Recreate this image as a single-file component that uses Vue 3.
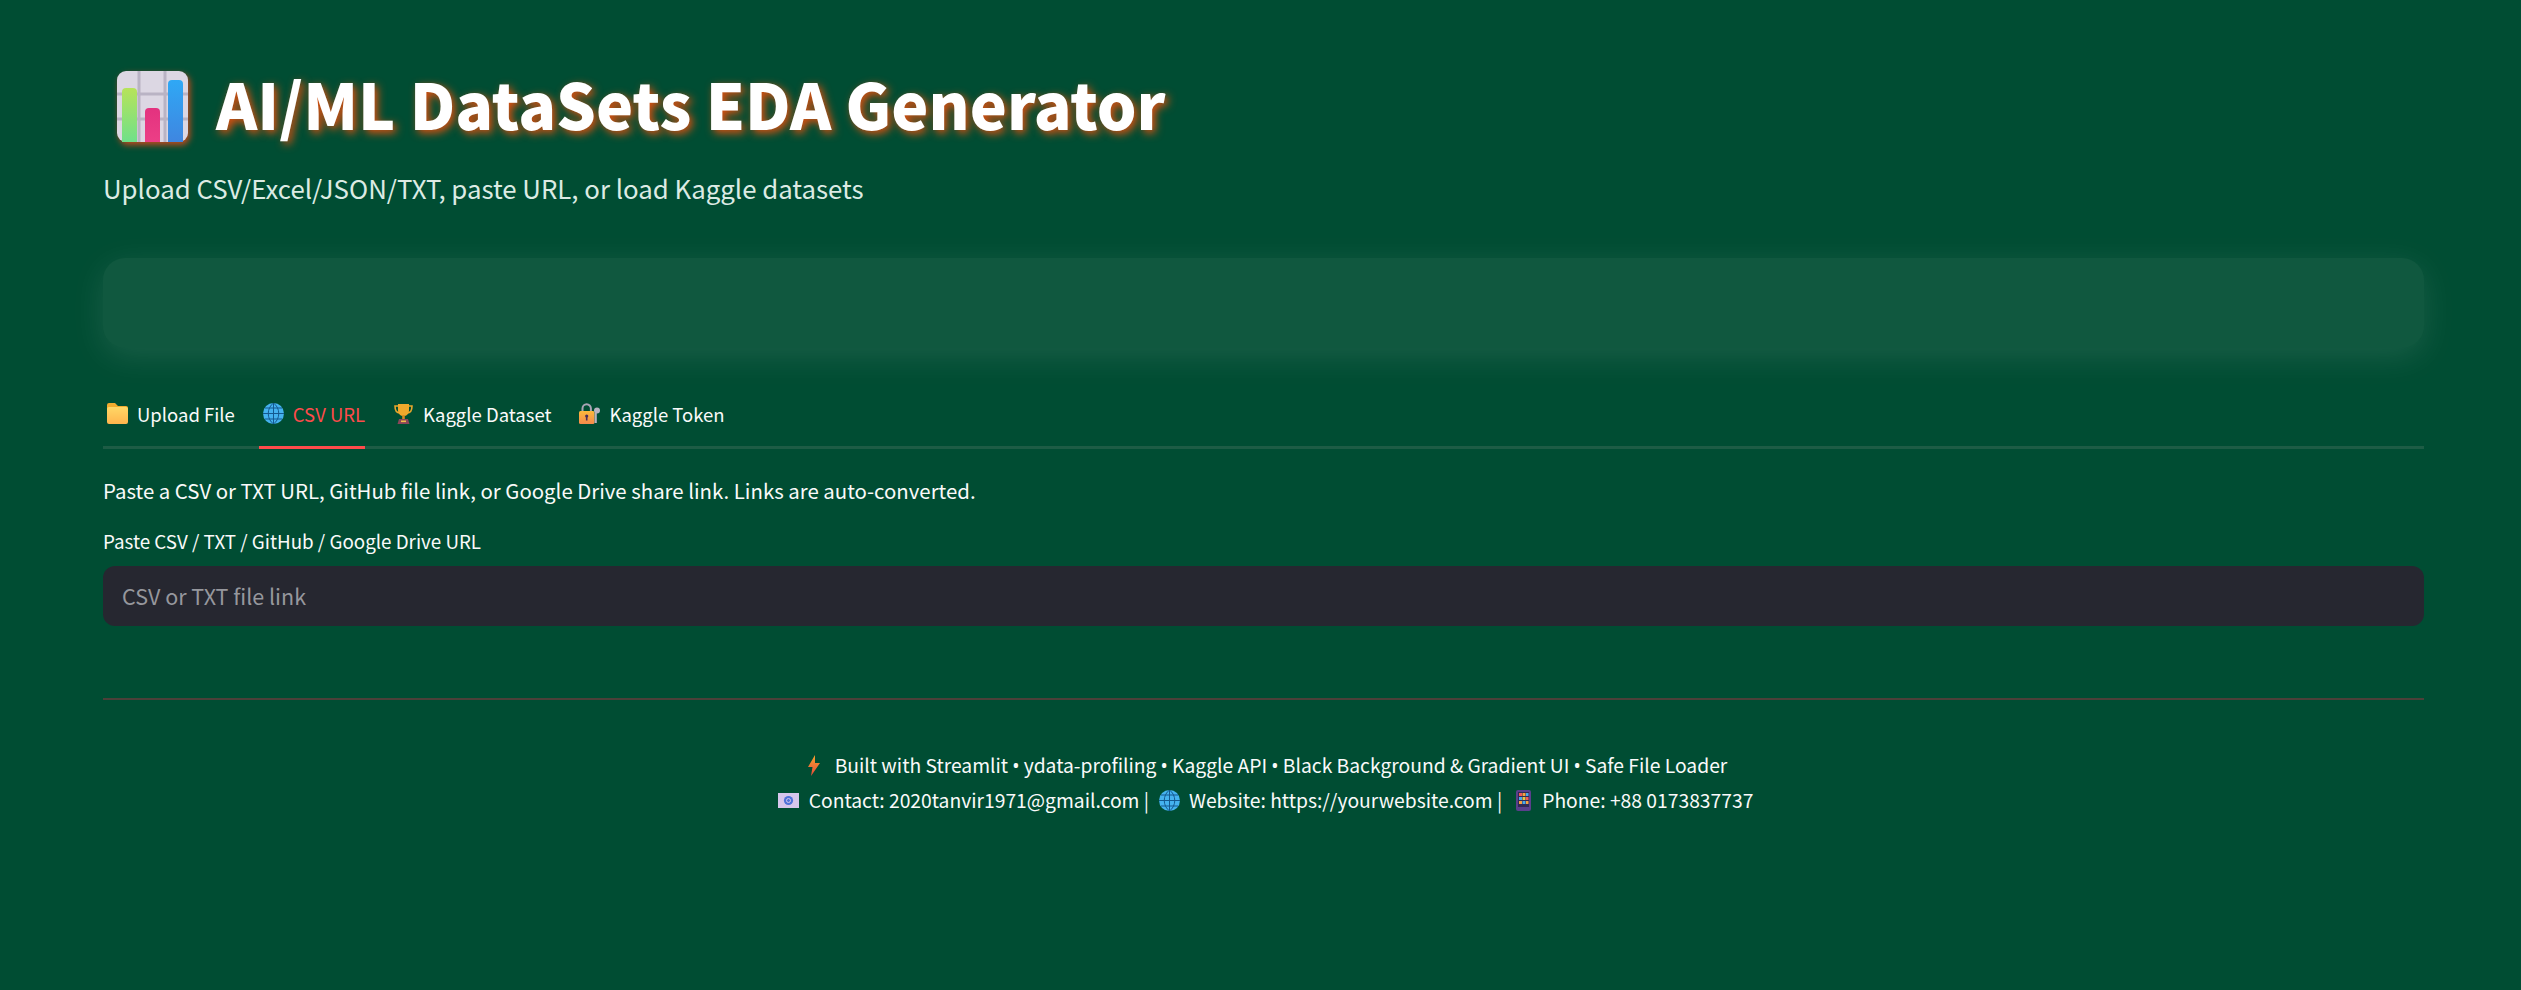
<script setup>
const tabs = [
  { label: 'Upload File', icon: 'folder' },
  { label: 'CSV URL', icon: 'globe', active: true },
  { label: 'Kaggle Dataset', icon: 'trophy' },
  { label: 'Kaggle Token', icon: 'lock' },
]
const credits = ['Built with Streamlit', 'ydata-profiling', 'Kaggle API', 'Black Background & Gradient UI', 'Safe File Loader']
</script>

<template>
  <main class="page">
    <h1 class="title">
      <svg class="chart" viewBox="0 0 71 71" aria-hidden="true">
        <defs>
          <linearGradient id="gGreen" x1="0" y1="0" x2="0" y2="1"><stop offset="0" stop-color="#b7e35a"/><stop offset="1" stop-color="#6fe08a"/></linearGradient>
          <linearGradient id="gPink" x1="0" y1="0" x2="0" y2="1"><stop offset="0" stop-color="#e3327f"/><stop offset="1" stop-color="#ec3f86"/></linearGradient>
          <linearGradient id="gBlue" x1="0" y1="0" x2="0" y2="1"><stop offset="0" stop-color="#2fa8f5"/><stop offset="1" stop-color="#3f86e0"/></linearGradient>
        </defs>
        <rect width="71" height="71" rx="9" fill="#dcd7e3"/>
        <path d="M0 23h71M0 48h71M22 0v71M48 0v71" stroke="#b9b3c4" stroke-width="3"/>
        <path d="M5 71V21a4 4 0 0 1 4-4h7a4 4 0 0 1 4 4v50z" fill="url(#gGreen)"/>
        <path d="M28 71V41a4 4 0 0 1 4-4h7a4 4 0 0 1 4 4v30z" fill="url(#gPink)"/>
        <path d="M51 71V13a4 4 0 0 1 4-4h7a4 4 0 0 1 4 4v58z" fill="url(#gBlue)"/>
      </svg>
      <span class="title-text">AI/ML DataSets EDA Generator</span>
    </h1>
    <p class="subtitle">Upload CSV/Excel/JSON/TXT, paste URL, or load Kaggle datasets</p>
    <div class="glass"></div>
    <nav class="tabs">
      <button v-for="t in tabs" :key="t.label" class="tab" :class="{ active: t.active }">
        <svg class="ico" viewBox="0 0 21 21" aria-hidden="true">
          <template v-if="t.icon === 'folder'">
            <defs><linearGradient id="gFolder" x1="0" y1="0" x2="0" y2="1"><stop offset="0" stop-color="#ffd766"/><stop offset="1" stop-color="#ffb54d"/></linearGradient></defs>
            <path d="M0 2a2 2 0 0 1 2-2h6l3 3h8a2 2 0 0 1 2 2v8H0z" fill="#f2ab2f"/>
            <path d="M0 6a2 2 0 0 1 2-2h17a2 2 0 0 1 2 2v13a2 2 0 0 1-2 2H2a2 2 0 0 1-2-2z" fill="url(#gFolder)"/>
          </template>
          <template v-else-if="t.icon === 'globe'">
            <circle cx="10.5" cy="10.5" r="10.5" fill="#45b2ef"/>
            <path d="M10.5 0v21M0 10.5h21M2 5h17M2 16h17M10.5 0c-7 5-7 16 0 21M10.5 0c7 5 7 16 0 21" stroke="#14598f" stroke-width="1" fill="none"/>
          </template>
          <template v-else-if="t.icon === 'trophy'">
            <path d="M5 3H2c0 5 2 7 5 7M16 3h3c0 5-2 7-5 7" stroke="#e8a62c" stroke-width="1.6" fill="none"/>
            <path d="M5 1h11v6c0 4-2.5 6-5.5 6S5 11 5 7z" fill="#f0a92c"/>
            <rect x="9.2" y="12" width="2.6" height="4" fill="#d58a22"/>
            <path d="M6 16h9l1.5 5h-12z" fill="#8a4659"/>
            <rect x="8" y="17.5" width="5" height="1.6" fill="#f0c04a"/>
          </template>
          <template v-else-if="t.icon === 'lock'">
            <defs><linearGradient id="gLock" x1="0" y1="0" x2="0" y2="1"><stop offset="0" stop-color="#fdb93b"/><stop offset="1" stop-color="#f58a4c"/></linearGradient></defs>
            <path d="M3.5 10V5.5a4.2 4.2 0 0 1 8.4 0V10" stroke="#a9a4b5" stroke-width="2" fill="none"/>
            <rect x="0" y="8" width="15.5" height="13" rx="1.5" fill="url(#gLock)"/>
            <circle cx="7.7" cy="13" r="1.6" fill="#4b2d58"/>
            <rect x="6.9" y="13" width="1.6" height="4.5" fill="#4b2d58"/>
            <path d="M16.7 20V10" stroke="#b8b3c2" stroke-width="2.2"/>
            <circle cx="18" cy="7.5" r="3" fill="#b8b3c2"/>
          </template>
        </svg>
        <span>{{ t.label }}</span>
      </button>
    </nav>
    <p class="hint">Paste a CSV or TXT URL, GitHub file link, or Google Drive share link. Links are auto-converted.</p>
    <label class="label">Paste CSV / TXT / GitHub / Google Drive URL</label>
    <div class="input">CSV or TXT file link</div>
    <hr class="rule" />
    <footer class="footer">
      <div class="line first">
        <svg class="fi zap" viewBox="0 0 12 21" aria-hidden="true">
          <defs><linearGradient id="gZap" x1="0" y1="0" x2="0" y2="1"><stop offset="0" stop-color="#f6a52e"/><stop offset="1" stop-color="#e8483a"/></linearGradient></defs>
          <path d="M7 0 0 12h4.5L3 21l9-13H7z" fill="url(#gZap)"/>
        </svg>
        <template v-for="(c, i) in credits" :key="c">
          <span v-if="i" class="dot">•</span>
          <span>{{ c }}</span>
        </template>
      </div>
      <div class="line second">
        <svg class="fi mail" viewBox="0 0 21 15" aria-hidden="true">
          <rect width="21" height="15" fill="#d6c6ec"/>
          <circle cx="10.5" cy="7.5" r="4.6" fill="#4f72d9"/>
          <circle cx="10.5" cy="7.5" r="2" fill="none" stroke="#d6c6ec" stroke-width="1"/>
        </svg>
        <span>Contact: 2020tanvir1971@gmail.com |</span>
        <svg class="fi globe" viewBox="0 0 21 21" aria-hidden="true">
          <circle cx="10.5" cy="10.5" r="10.5" fill="#45b2ef"/>
          <path d="M10.5 0v21M0 10.5h21M2 5h17M2 16h17M10.5 0c-7 5-7 16 0 21M10.5 0c7 5 7 16 0 21" stroke="#14598f" stroke-width="1" fill="none"/>
        </svg>
        <span>Website: https://yourwebsite.com |</span>
        <svg class="fi phone" viewBox="0 0 15 21" aria-hidden="true">
          <rect width="15" height="21" rx="2" fill="#5a3f8c"/>
          <rect x="2" y="2" width="11" height="15" fill="#2f2a55"/>
          <path d="M3 3h3v3H3z" fill="#f05a5a"/><path d="M6.5 3h3v3h-3z" fill="#f6a23f"/><path d="M10 3h2.5v3H10z" fill="#4aa8e8"/>
          <path d="M3 7h3v3H3z" fill="#4aa8e8"/><path d="M6.5 7h3v3h-3z" fill="#e8c547"/><path d="M10 7h2.5v3H10z" fill="#f05a5a"/>
          <path d="M3 11h3v3H3z" fill="#f6a23f"/><path d="M6.5 11h3v3h-3z" fill="#4aa8e8"/><path d="M10 11h2.5v3H10z" fill="#f6a23f"/>
        </svg>
        <span>Phone: +88 0173837737</span>
      </div>
    </footer>
  </main>
</template>

<style>
html, body { margin: 0; background: #004d33; }
</style>

<style scoped>
.page {
  box-sizing: border-box;
  min-height: 990px;
  padding: 64px 97px 0 103px;
  background: #004d33;
  color: #fafafa;
  font-family: "Noto Sans CJK SC", "Noto Sans", sans-serif;
}
.title {
  display: flex;
  align-items: center;
  height: 84px;
  margin: 0;
  font-size: 62.5px;
  line-height: 84px;
  font-weight: 900;
  color: #fff;
  text-shadow: 3px 3px 8px #e0500f;
}
.title-text { position: relative; top: -3px; }
.chart {
  flex: none;
  width: 71px;
  height: 71px;
  margin: 0 28px 0 14px;
  filter: drop-shadow(2px 3px 3px #c2491d);
}
.subtitle {
  margin: 20px 0 0;
  font-size: 25.8px;
  line-height: 40px;
  color: #dcebe4;
}
.glass {
  height: 90px;
  margin-top: 50px;
  border-radius: 22px;
  background: #10583f;
  box-shadow: 0 8px 32px rgba(255, 255, 255, 0.1);
}
.tabs {
  display: flex;
  gap: 24px;
  margin-top: 33px;
  border-bottom: 3px solid #1d5c45;
}
.tab {
  display: flex;
  align-items: center;
  height: 68px;
  margin-bottom: -3px;
  padding: 0;
  border: 0;
  border-bottom: 3px solid transparent;
  background: none;
  color: #fafafa;
  font: 400 18.5px "Noto Sans CJK SC", sans-serif;
}
.tab.active {
  color: #ff4b4b;
  border-bottom-color: #ff4b4b;
}
.ico { width: 21px; height: 21px; margin: 0 9px 0 4px; flex: none; }
.hint { margin: 24px 0 0; font-size: 20.4px; line-height: 34px; }
.label { display: block; margin-top: 20px; font-size: 18.8px; line-height: 28px; }
.input {
  box-sizing: border-box;
  height: 60px;
  margin-top: 11px;
  padding: 0 19px;
  border-radius: 12px;
  background: #262730;
  color: #96979d;
  font-size: 21.5px;
  line-height: 60px;
}
.rule { height: 2px; margin: 72px 0 0; border: 0; background: #4b4039; }
.footer { margin-top: 48px; font-size: 19.3px; line-height: 35px; }
.line { display: flex; justify-content: center; align-items: center; white-space: pre; }
.first { padding-left: 8px; }
.second { padding-left: 4px; }
.dot { margin: 0 4.2px; font-family: "Noto Sans", sans-serif; }
.fi { flex: none; }
.zap { width: 12px; height: 21px; margin-right: 15px; }
.mail { width: 21px; height: 15px; margin-right: 10px; }
.globe { width: 21px; height: 21px; margin: 0 9px 0 10px; }
.phone { width: 15px; height: 21px; margin: 0 11px 0 14px; }
</style>
